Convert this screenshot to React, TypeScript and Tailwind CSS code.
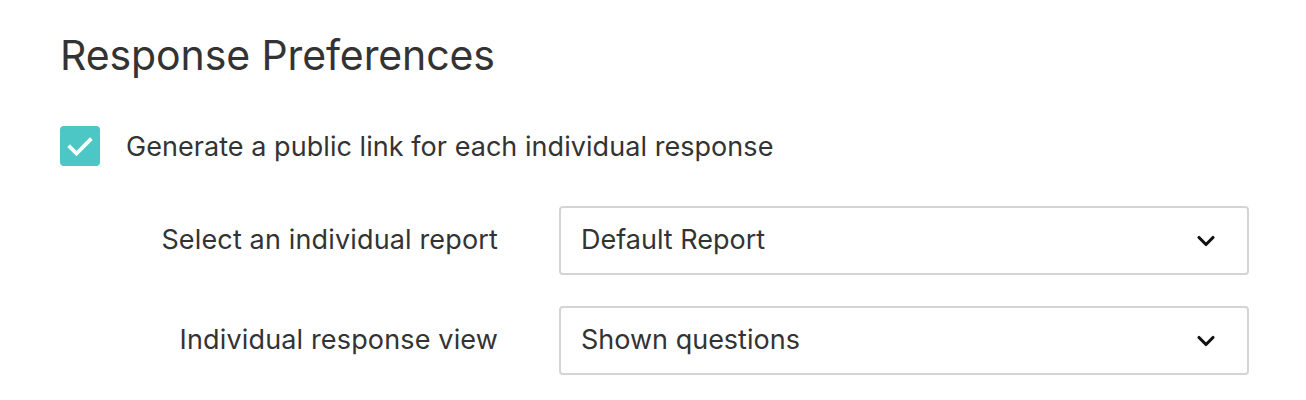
import { ChevronDown } from 'lucide-react';

// Response preferences panel — heading, checkbox and two select rows

const rows = [
  { label: 'Select an individual report', value: 'Default Report' },
  { label: 'Individual response view', value: 'Shown questions' },
];

export default function App() {
  return (
    <div
      className="w-[1306px] h-[400px] bg-white text-[#333333] pl-[60px] pt-[27px]"
      style={{ fontFamily: 'Inter, "Noto Sans", sans-serif' }}
    >
      <h1 className="text-[41px] leading-[56px] font-normal tracking-[-0.1px]">Response Preferences</h1>

      <label className="mt-[43px] flex items-center gap-[26px] h-[40px]">
        <span className="w-[40px] h-[40px] rounded-[4px] bg-[#4cc7c5] flex items-center justify-center">
          <svg width="28" height="28" viewBox="0 0 28 28" fill="none">
            <path d="M4 15l6.5 6.5L24 8" stroke="white" strokeWidth="3.8" strokeLinecap="square" />
          </svg>
        </span>
        <span className="text-[27px] leading-none tracking-[0.05px]">
          Generate a public link for each individual response
        </span>
      </label>

      <div className="mt-[40px] flex flex-col gap-[31px]">
        {rows.map((r) => (
          <div key={r.label} className="flex items-center">
            <div className="w-[438px] text-right text-[27px] tracking-[0.15px]">{r.label}</div>
            <button className="ml-[61px] w-[690px] h-[69px] border-2 border-[#d4d4d4] rounded-[4px] flex items-center justify-between pl-[20px] pr-[27px] text-[27px] text-[#333333]">
              <span>{r.value}</span>
              <ChevronDown size={28} strokeWidth={2.7} className="text-[#111]" />
            </button>
          </div>
        ))}
      </div>
    </div>
  );
}
